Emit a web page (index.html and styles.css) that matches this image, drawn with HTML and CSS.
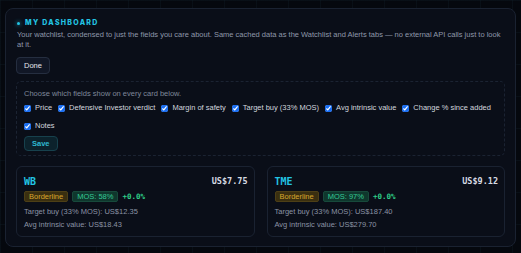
FILE: index.html
```html
<!DOCTYPE html>
<html lang="en">
<head>
    <meta charset="UTF-8">
    <meta name="viewport" content="width=device-width, initial-scale=1.0">
    <title>My Dashboard</title>
    <link rel="stylesheet" href="styles.css">
</head>
<body>
    <div class="panel">
        <h2 class="panel-title"><span class="dot"></span>My Dashboard</h2>
        <p class="intro">Your watchlist, condensed to just the fields you care about. Same cached data as the Watchlist and Alerts tabs — no external API calls just to look at it.</p>
        <button class="btn">Done</button>

        <div class="fields-box">
            <p class="fields-hint">Choose which fields show on every card below.</p>
            <div class="field-list">
                <label class="field"><input type="checkbox" checked>Price</label>
                <label class="field"><input type="checkbox" checked>Defensive Investor verdict</label>
                <label class="field"><input type="checkbox" checked>Margin of safety</label>
                <label class="field"><input type="checkbox" checked>Target buy (33% MOS)</label>
                <label class="field"><input type="checkbox" checked>Avg intrinsic value</label>
                <label class="field"><input type="checkbox" checked>Change % since added</label>
                <label class="field"><input type="checkbox" checked>Notes</label>
            </div>
            <button class="btn btn-save">Save</button>
        </div>

        <div class="cards">
            <div class="card">
                <div class="card-head">
                    <span class="ticker">WB</span>
                    <span class="price">US$7.75</span>
                </div>
                <div class="tags">
                    <span class="tag tag-warn">Borderline</span>
                    <span class="tag tag-good">MOS: 58%</span>
                    <span class="change">+0.0%</span>
                </div>
                <div class="line">Target buy (33% MOS): US$12.35</div>
                <div class="line">Avg intrinsic value: US$18.43</div>
            </div>
            <div class="card">
                <div class="card-head">
                    <span class="ticker">TME</span>
                    <span class="price">US$9.12</span>
                </div>
                <div class="tags">
                    <span class="tag tag-warn">Borderline</span>
                    <span class="tag tag-good">MOS: 97%</span>
                    <span class="change">+0.0%</span>
                </div>
                <div class="line">Target buy (33% MOS): US$187.40</div>
                <div class="line">Avg intrinsic value: US$279.70</div>
            </div>
        </div>
    </div>
</body>
</html>
```

FILE: styles.css
```css
body, html {
    margin: 0;
    padding: 0;
}

body {
    padding: 8px 5px 0;
    background-color: #05080e;
    background-image:
        linear-gradient(rgba(40, 70, 90, 0.12) 1px, transparent 1px),
        linear-gradient(90deg, rgba(40, 70, 90, 0.12) 1px, transparent 1px);
    background-size: 32px 32px;
    color: #9aa3b4;
    font-family: "Liberation Sans", Arial, sans-serif;
    font-size: 7.5px;
}

.panel {
    background-color: #0a0e18;
    border: 1px solid #1a2231;
    border-radius: 8px;
    padding: 9px 10px 9px;
}

.panel-title {
    display: flex;
    align-items: center;
    gap: 5px;
    margin: 0 0 2px 1px;
    font-family: Inter, "Liberation Sans", sans-serif;
    font-size: 7px;
    font-weight: 800;
    letter-spacing: 1.3px;
    text-transform: uppercase;
    color: #22c4e4;
    line-height: 10px;
}

.dot {
    width: 3px;
    height: 3px;
    border-radius: 50%;
    background-color: #22c4e4;
    box-shadow: 0 0 4px #22c4e4;
}

.intro {
    margin: 0 0 7px 1px;
    line-height: 10px;
    color: #8f98aa;
}

.btn {
    display: block;
    font-family: inherit;
    font-size: 7.5px;
    color: #e3e6ec;
    background-color: #111726;
    border: 1px solid #252e40;
    border-radius: 4px;
    height: 17px;
    padding: 0 7px;
    cursor: pointer;
}

.fields-box {
    margin-top: 7px;
    border: 1px dashed #1b2332;
    border-radius: 5px;
    padding: 7px 6px 4px 7px;
}

.fields-hint {
    margin: 0 0 4px;
    line-height: 10px;
    color: #7f889a;
}

.field-list {
    display: flex;
    flex-wrap: wrap;
    column-gap: 6px;
    row-gap: 8px;
}

.field {
    display: flex;
    align-items: center;
    gap: 4px;
    color: #d3d7df;
    line-height: 10px;
    white-space: nowrap;
}

.field input {
    width: 7px;
    height: 7px;
    margin: 0;
    accent-color: #1a6ef2;
}

.btn-save {
    margin-top: 5px;
    height: 15px;
    padding: 0 7px;
    font-weight: 700;
    color: #2fb8d0;
    background-color: #0c222c;
    border-color: #17414d;
}

.cards {
    display: grid;
    grid-template-columns: 1fr 1fr;
    gap: 12px;
    margin-top: 10px;
}

.card {
    border: 1px solid #1a2231;
    border-radius: 6px;
    padding: 8px 6px 5px 7px;
}

.card-head {
    display: flex;
    justify-content: space-between;
    align-items: center;
    height: 12px;
}

.ticker {
    font-family: "DejaVu Sans Mono", monospace;
    font-size: 10px;
    font-weight: 700;
    color: #22c4e4;
}

.price {
    font-family: "DejaVu Sans Mono", monospace;
    font-size: 8.5px;
    font-weight: 700;
    color: #d6dae2;
}

.tags {
    display: flex;
    align-items: center;
    gap: 4px;
    margin: 4px 0 3px;
}

.tag {
    padding: 0 4px;
    border-radius: 2px;
    line-height: 9px;
    border: 1px solid;
}

.tag-warn {
    color: #d8a62c;
    background-color: #3a2f10;
    border-color: #4d3f16;
}

.tag-good {
    color: #34c996;
    background-color: #0f372d;
    border-color: #17493b;
}

.change {
    font-family: "DejaVu Sans Mono", monospace;
    font-size: 7.5px;
    font-weight: 700;
    color: #2fd08a;
}

.line {
    line-height: 13px;
    color: #8a93a5;
}
```
